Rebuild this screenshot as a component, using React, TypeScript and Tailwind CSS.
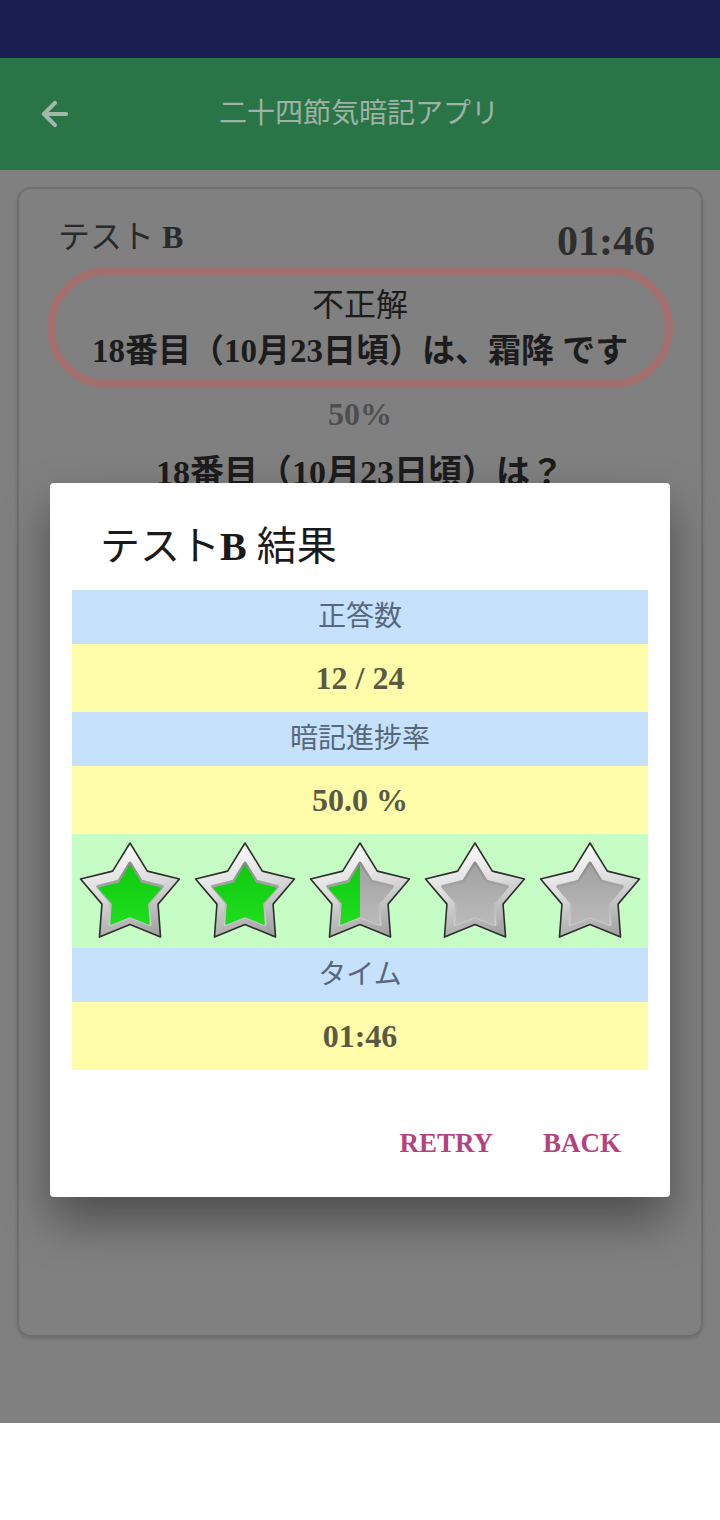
import { ArrowLeft } from "lucide-react";

const FONT = { fontFamily: '"Liberation Serif", "Noto Sans CJK JP", serif' };

type StarFill = "full" | "half" | "empty";

// ten points of a five-pointed star, starting from the top point
const starPoints = (cx: number, cy: number, R: number, r: number) =>
  Array.from({ length: 10 }, (_, i) => {
    const a = (Math.PI / 5) * i - Math.PI / 2;
    const rad = i % 2 === 0 ? R : r;
    return `${(cx + rad * Math.cos(a)).toFixed(2)},${(cy + rad * Math.sin(a)).toFixed(2)}`;
  }).join(" ");

const Star = ({ fill, idx }: { fill: StarFill; idx: number }) => {
  const silver = `silver-${idx}`;
  const rim = `rim-${idx}`;
  const grey = `grey-${idx}`;
  const green = `green-${idx}`;
  const clip = `clip-${idx}`;

  return (
    <svg width="106" height="102" viewBox="0 0 106 102">
      <defs>
        <linearGradient id={silver} x1="0.3" y1="0" x2="0.6" y2="1">
          <stop offset="0%" stopColor="#ffffff" />
          <stop offset="50%" stopColor="#dadada" />
          <stop offset="100%" stopColor="#a2a2a2" />
        </linearGradient>
        <linearGradient id={rim} x1="0" y1="0" x2="0" y2="1">
          <stop offset="0%" stopColor="#8a8a8a" />
          <stop offset="100%" stopColor="#cfcfcf" />
        </linearGradient>
        <linearGradient id={grey} x1="0" y1="0" x2="0" y2="1">
          <stop offset="0%" stopColor="#a2a2a2" />
          <stop offset="100%" stopColor="#bababa" />
        </linearGradient>
        <linearGradient id={green} x1="0" y1="0" x2="0" y2="1">
          <stop offset="0%" stopColor="#0fcb0f" />
          <stop offset="100%" stopColor="#20dd20" />
        </linearGradient>
        <clipPath id={clip}>
          <rect x="0" y="0" width="53" height="102" />
        </clipPath>
      </defs>

      <polygon
        points={starPoints(53, 55, 52, 29.5)}
        fill={`url(#${silver})`}
        stroke="#2e2e2e"
        strokeWidth="1.6"
        strokeLinejoin="round"
      />
      <polygon
        points={starPoints(53, 57, 34, 19.5)}
        fill={`url(#${rim})`}
        stroke={`url(#${rim})`}
        strokeWidth="3"
        strokeLinejoin="round"
      />
      <polygon
        points={starPoints(53, 58, 32, 18)}
        fill={fill === "full" ? `url(#${green})` : `url(#${grey})`}
        stroke={fill === "full" ? `url(#${green})` : `url(#${grey})`}
        strokeWidth="2"
        strokeLinejoin="round"
      />
      {fill === "half" && (
        <polygon
          points={starPoints(53, 58, 32, 18)}
          fill={`url(#${green})`}
          stroke={`url(#${green})`}
          strokeWidth="2"
          strokeLinejoin="round"
          clipPath={`url(#${clip})`}
        />
      )}
    </svg>
  );
};

const LabelRow = ({ label }: { label: string }) => (
  <div className="h-[54px] bg-[#c6e1fb] flex items-center justify-center text-[28px] text-[#56687b]">
    {label}
  </div>
);

const ValueRow = ({ value }: { value: string }) => (
  <div className="h-[68px] bg-[#fffcaa] flex items-center justify-center text-[32px] font-bold text-[#5a5a44]">
    {value}
  </div>
);

const stars: StarFill[] = ["full", "full", "half", "empty", "empty"];

export default function App() {
  return (
    <div className="relative w-[720px] min-h-[1520px] bg-white" style={FONT}>
      {/* status bar */}
      <div className="h-[58px] bg-[#1b1e50]" />

      {/* app bar */}
      <div className="h-[112px] bg-[#2a7548] flex items-center px-9 relative">
        <ArrowLeft size={38} strokeWidth={2.6} className="text-[#a4b8aa]" />
        <div className="flex-1 text-center text-[28px] text-[#9eb2a5] pr-[40px]">
          二十四節気暗記アプリ
        </div>
      </div>

      {/* dimmed page */}
      <div className="h-[1253px] bg-[#808080] pt-[17px] px-[17px]">
        <div className="h-[1150px] rounded-[14px] border-2 border-[#6f6f6f] shadow-[0_2px_3px_rgba(0,0,0,0.15)] px-[28px] pt-[22px]">
          <div className="flex items-center justify-between pl-[11px] pr-[18px] h-[52px]">
            <div className="text-[32px] text-[#2a2a2a]">
              テスト <span className="font-bold">B</span>
            </div>
            <div className="text-[42px] font-bold text-[#2e2e2e] pt-[8px]">01:46</div>
          </div>

          <div className="mt-[4px] h-[121px] rounded-full border-[8px] border-[#a36f6f] flex flex-col items-center justify-center text-[#1c1c1c]">
            <div className="text-[32px] leading-[46px]">不正解</div>
            <div className="text-[33px] leading-[46px] font-semibold">
              18番目（10月23日頃）は、霜降 です
            </div>
          </div>

          <div className="text-center text-[32px] font-bold text-[#4e4e4e] leading-[50px] mt-[1px]">
            50%
          </div>

          <div className="text-center text-[34px] font-semibold text-[#1c1c1c] mt-[14px] leading-[40px]">
            18番目（10月23日頃）は？
          </div>
        </div>
      </div>

      {/* dialog overlay */}
      <div className="absolute inset-x-0 top-0 h-[1423px] flex justify-center pt-[483px]">
        <div className="w-[620px] h-[714px] bg-white rounded-[4px] shadow-[0_24px_48px_rgba(0,0,0,0.4)] flex flex-col">
          <div className="h-[107px] flex items-center pl-[50px] pt-[20px] text-[40px] text-[#1a1a1a]">
            テスト<span className="font-bold">B</span>&nbsp;結果
          </div>

          <div className="mx-[22px] flex flex-col">
            <LabelRow label="正答数" />
            <ValueRow value="12 / 24" />
            <LabelRow label="暗記進捗率" />
            <ValueRow value="50.0 %" />
            <div className="h-[114px] bg-[#c5fdc4] flex items-center">
              {stars.map((s, i) => (
                <div key={i} className="flex-1 flex justify-center">
                  <Star fill={s} idx={i} />
                </div>
              ))}
            </div>
            <LabelRow label="タイム" />
            <ValueRow value="01:46" />
          </div>

          <div className="flex justify-end gap-[18px] pr-[33px] mt-[46px]">
            <button className="px-4 h-[54px] text-[27px] font-bold text-[#b3437f]">RETRY</button>
            <button className="px-4 h-[54px] text-[27px] font-bold text-[#b3437f]">BACK</button>
          </div>
        </div>
      </div>
    </div>
  );
}
